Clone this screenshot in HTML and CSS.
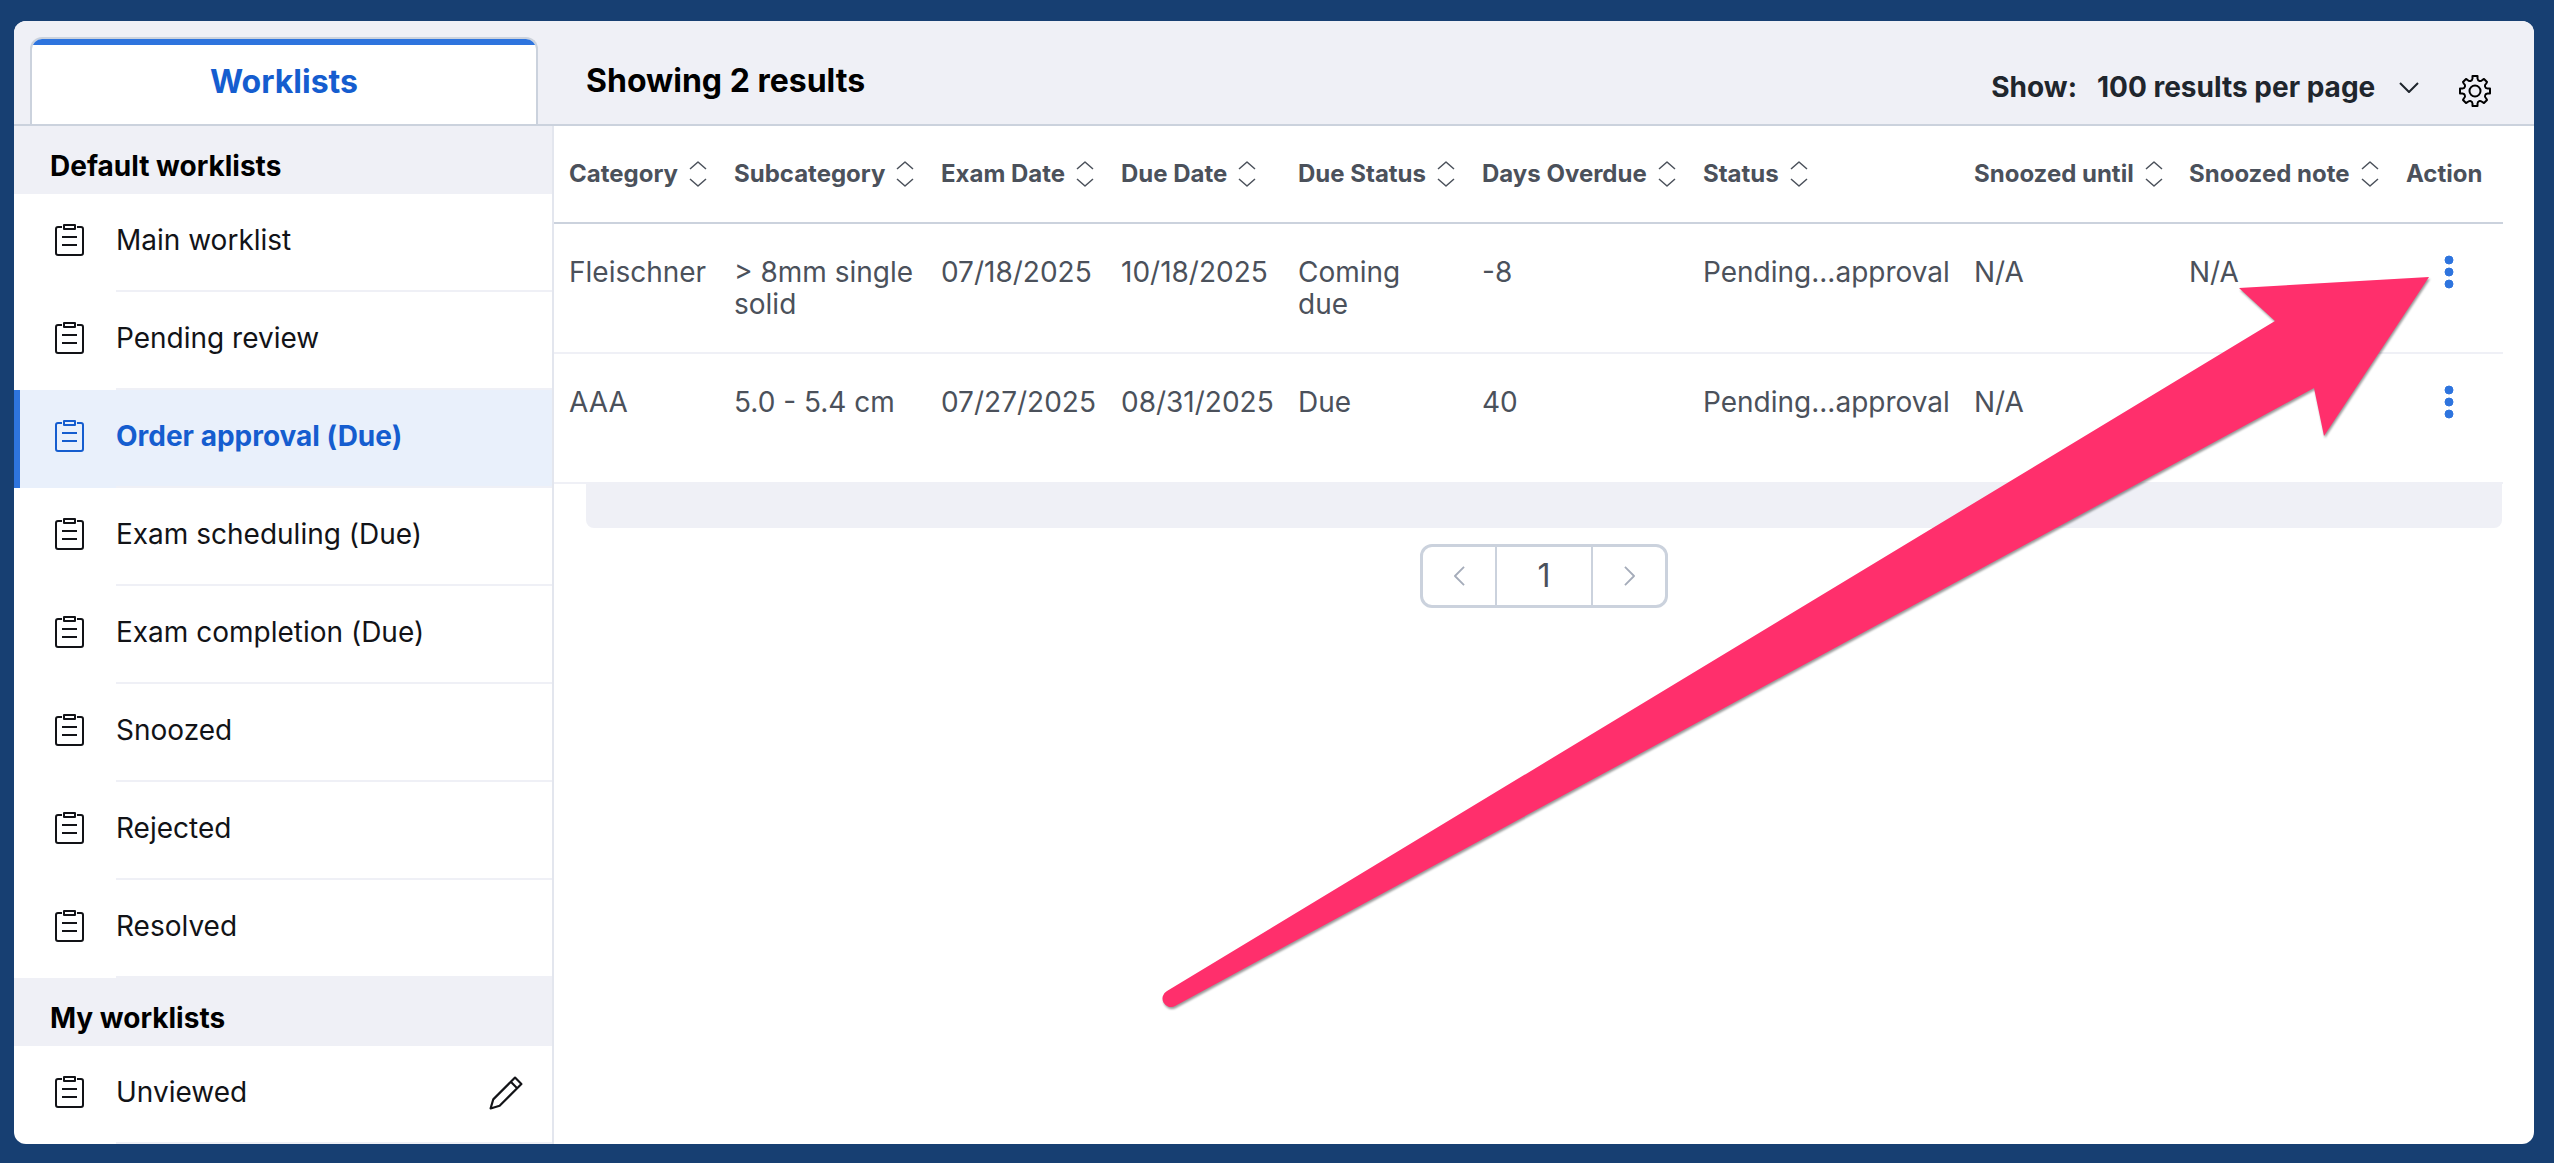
FILE: index.html
```html
<!DOCTYPE html>
<html lang="en">
<head>
  <meta charset="UTF-8" />
  <meta name="viewport" content="width=device-width, initial-scale=1.0" />
  <title>Worklists</title>
  <link rel="stylesheet" href="styles.css">
</head>
<body>
  <svg class="sprite" aria-hidden="true">
    <symbol id="clipboard" viewBox="0 0 30 32">
      <path d="M7 3H3Q1 3 1 5V29Q1 31 3 31H26Q28 31 28 29V5Q28 3 26 3H22M9 1H20V5H9ZM7 13H22M7 21H22" />
    </symbol>
    <symbol id="sort" viewBox="0 0 18 26">
      <path d="M1 8L9 1L17 8M1 18L9 25L17 18" />
    </symbol>
    <symbol id="dots" viewBox="0 0 10 34">
      <circle cx="5" cy="5" r="4" /><circle cx="5" cy="17" r="4" /><circle cx="5" cy="29" r="4" />
    </symbol>
  </svg>

  <div class="panel">
    <header class="topbar">
      <div class="tabs">
        <button class="tab" type="button">Worklists</button>
      </div>
      <h1 class="results-count">Showing 2 results</h1>
      <div class="tools">
        <label for="pageSize">Show:</label>
        <div class="select-wrap">
          <select id="pageSize">
            <option>100 results per page</option>
          </select>
          <svg class="chevron" viewBox="0 0 20 11"><path d="M1 1L10 10L19 1" /></svg>
        </div>
        <button class="icon-btn" type="button" aria-label="Settings">
          <svg class="gear" viewBox="0 0 32 32">
            <path d="M13.500 1H18.500V3.500Q18.700 5.500 20.500 6Q22 6.500 23.500 4.800L25 4L28 7L27.200 8.500Q25.500 10 26 11.500Q26.500 13.300 28.500 13.500H31V18.500H28.500Q26.500 18.700 26 20.500Q25.500 22 27.200 23.500L28 25L25 28L23.500 27.200Q22 25.500 20.500 26Q18.700 26.500 18.500 28.500V31H13.500V28.500Q13.300 26.500 11.500 26Q10 25.500 8.500 27.200L7 28L4 25L4.800 23.500Q6.500 22 6 20.500Q5.500 18.700 3.500 18.500H1V13.500H3.500Q5.500 13.300 6 11.500Q6.500 10 4.800 8.500L4 7L7 4L8.500 4.800Q10 6.500 11.500 6Q13.300 5.500 13.500 3.500Z" />
            <circle cx="16" cy="16" r="5.500" />
          </svg>
        </button>
      </div>
    </header>

    <div class="body">
      <nav class="sidebar">
        <h2>Default worklists</h2>
        <ul>
          <li><a href="#"><svg><use href="#clipboard" /></svg><span>Main worklist</span></a></li>
          <li><a href="#"><svg><use href="#clipboard" /></svg><span>Pending review</span></a></li>
          <li><a href="#" class="active"><svg><use href="#clipboard" /></svg><span>Order approval (Due)</span></a></li>
          <li><a href="#"><svg><use href="#clipboard" /></svg><span>Exam scheduling (Due)</span></a></li>
          <li><a href="#"><svg><use href="#clipboard" /></svg><span>Exam completion (Due)</span></a></li>
          <li><a href="#"><svg><use href="#clipboard" /></svg><span>Snoozed</span></a></li>
          <li><a href="#"><svg><use href="#clipboard" /></svg><span>Rejected</span></a></li>
          <li><a href="#"><svg><use href="#clipboard" /></svg><span>Resolved</span></a></li>
        </ul>
        <h2>My worklists</h2>
        <ul>
          <li>
            <a href="#"><svg><use href="#clipboard" /></svg><span>Unviewed</span></a>
            <button class="edit" type="button" aria-label="Edit worklist">
              <svg viewBox="0 0 32 32"><path d="M24.500 1.500L30.500 7.500L10 28L1.500 30.500L4 22ZM20.500 5.500L26.500 11.500" /></svg>
            </button>
          </li>
        </ul>
      </nav>

      <main class="content">
        <table>
          <colgroup>
            <col class="c-category"><col class="c-subcategory"><col class="c-exam"><col class="c-due"><col class="c-due-status">
            <col class="c-overdue"><col class="c-status"><col class="c-until"><col class="c-note"><col class="c-action">
          </colgroup>
          <thead>
            <tr>
              <th><button type="button">Category <svg><use href="#sort" /></svg></button></th>
              <th><button type="button">Subcategory <svg><use href="#sort" /></svg></button></th>
              <th><button type="button">Exam Date <svg><use href="#sort" /></svg></button></th>
              <th><button type="button">Due Date <svg><use href="#sort" /></svg></button></th>
              <th><button type="button">Due Status <svg><use href="#sort" /></svg></button></th>
              <th><button type="button">Days Overdue <svg><use href="#sort" /></svg></button></th>
              <th><button type="button">Status <svg><use href="#sort" /></svg></button></th>
              <th><button type="button">Snoozed until <svg><use href="#sort" /></svg></button></th>
              <th><button type="button">Snoozed note <svg><use href="#sort" /></svg></button></th>
              <th>Action</th>
            </tr>
          </thead>
          <tbody>
            <tr>
              <td>Fleischner</td>
              <td class="wrap">&gt; 8mm single solid</td>
              <td>07/18/2025</td>
              <td>10/18/2025</td>
              <td class="wrap">Coming<br>due</td>
              <td>-8</td>
              <td>Pending...approval</td>
              <td>N/A</td>
              <td>N/A</td>
              <td><button class="more" type="button" aria-label="Actions"><svg><use href="#dots" /></svg></button></td>
            </tr>
            <tr>
              <td>AAA</td>
              <td class="wrap">5.0 - 5.4 cm</td>
              <td>07/27/2025</td>
              <td>08/31/2025</td>
              <td class="wrap">Due</td>
              <td>40</td>
              <td>Pending...approval</td>
              <td>N/A</td>
              <td></td>
              <td><button class="more" type="button" aria-label="Actions"><svg><use href="#dots" /></svg></button></td>
            </tr>
          </tbody>
        </table>
        <div class="table-footer"></div>
        <div class="pager-row">
          <div class="pagination">
            <button type="button" aria-label="Previous page"><svg viewBox="0 0 12 22"><path d="M11 1L1 11L11 21" /></svg></button>
            <button class="page" type="button">1</button>
            <button type="button" aria-label="Next page"><svg viewBox="0 0 12 22"><path d="M1 1L11 11L1 21" /></svg></button>
          </div>
        </div>
      </main>
    </div>

    <svg class="pointer" viewBox="0 0 1280 750" aria-hidden="true">
      <path d="M1269 17L1079 28L1115 61L7 731A8 8 0 0 0 15 746L1154 128L1164 176Z" />
    </svg>
  </div>
</body>
</html>
```

FILE: styles.css
```css
* {
  box-sizing: border-box;
}
body {
  margin: 0;
  min-height: 100vh;
  padding: 21px 20px 19px 14px;
  background: #173f72;
  font-family: Inter, sans-serif;
  font-size: 28px;
  line-height: 32px;
  color: #4b515b;
  display: flex;
}
button, select {
  font: inherit;
  color: inherit;
  background: none;
  border: 0;
  padding: 0;
  margin: 0;
}
svg {
  display: block;
  fill: none;
  stroke: currentColor;
  stroke-width: 2;
  stroke-linejoin: round;
}
h1, h2, ul {
  margin: 0;
  padding: 0;
}
.sprite {
  position: absolute;
  width: 0;
  height: 0;
}
.panel {
  flex: 1;
  min-width: 0;
  position: relative;
  display: flex;
  flex-direction: column;
  background: #fff;
  border-radius: 12px;
  overflow: hidden;
}

/* top bar */
.topbar {
  display: flex;
  align-items: stretch;
  background: #eff0f6;
  border-bottom: 2px solid #cbd2dd;
  padding-top: 16px;
}
.tabs {
  width: 540px;
  padding: 0 16px;
}
.tab {
  position: relative;
  overflow: hidden;
  width: 100%;
  height: 87px;
  background: #fff;
  border: 2px solid #cbd2dd;
  border-bottom: 0;
  border-radius: 12px 12px 0 0;
  color: #155dcf;
  font-size: 32px;
  font-weight: 700;
}
.tab::before {
  content: "";
  position: absolute;
  inset: 0 0 auto;
  height: 6px;
  background: #2e74de;
}
.results-count {
  flex: 1;
  padding: 24px 0 0 32px;
  font-size: 32px;
  font-weight: 700;
  line-height: 40px;
  color: #000;
}
.tools {
  display: flex;
  align-items: center;
  gap: 20px;
  padding: 13px 43px 0 0;
  font-weight: 700;
  color: #1f262d;
}
.select-wrap {
  display: flex;
  align-items: center;
}
.select-wrap select {
  appearance: none;
  padding-right: 43px;
}
.chevron {
  width: 20px;
  height: 11px;
  margin-left: -20px;
  pointer-events: none;
}
.icon-btn {
  margin-left: 20px;
  padding-top: 7px;
  color: #000;
}
.gear {
  width: 32px;
  height: 32px;
}

/* sidebar */
.body {
  flex: 1;
  display: flex;
}
.sidebar {
  width: 540px;
  border-right: 2px solid #e3e6ee;
  color: #121317;
}
.sidebar h2 {
  height: 68px;
  padding: 24px 36px 12px;
  background: #eff0f6;
  color: #000;
  font-size: 28px;
  font-weight: 700;
  line-height: 32px;
}
.sidebar ul {
  list-style: none;
}
.sidebar li {
  display: flex;
  position: relative;
}
.sidebar a {
  flex: 1;
  display: flex;
  color: inherit;
  text-decoration: none;
  padding-left: 41px;
}
.sidebar a svg {
  width: 30px;
  height: 32px;
  margin: 30px 31px 0 0;
}
.sidebar a span {
  flex: 1;
  height: 98px;
  padding-top: 30px;
  border-bottom: 2px solid #eff0f6;
}
.sidebar .active {
  background: #e9f0fb;
  box-shadow: inset 6px 0 #2e74de;
  color: #155dcf;
  font-weight: 700;
}
.edit {
  position: absolute;
  right: 29px;
  top: 30px;
}
.edit svg {
  width: 34px;
  height: 34px;
}

/* results table */
.content {
  flex: 1;
  min-width: 0;
  padding-right: 32px;
}
table {
  width: 100%;
  table-layout: fixed;
  border-collapse: separate;
  border-spacing: 0;
}
.c-category { width: 165px; }
.c-subcategory { width: 207px; }
.c-exam { width: 180px; }
.c-due { width: 177px; }
.c-due-status { width: 184px; }
.c-overdue { width: 221px; }
.c-status { width: 271px; }
.c-until { width: 215px; }
.c-note { width: 217px; }
.c-action { width: 112px; }
th {
  height: 98px;
  padding: 0 0 0 15px;
  border-bottom: 2px solid #cbd2dd;
  font-size: 24px;
  font-weight: 700;
  text-align: left;
}
th button {
  display: flex;
  align-items: center;
  gap: 11px;
}
th svg {
  width: 18px;
  height: 26px;
  stroke-width: 1.5;
}
td {
  height: 130px;
  padding: 32px 0 32px 15px;
  border-bottom: 2px solid #eff0f6;
  vertical-align: top;
  white-space: nowrap;
}
.wrap {
  white-space: normal;
}
.more {
  display: block;
  margin: -1px 0 0 38px;
}
.more svg {
  width: 10px;
  height: 34px;
  fill: #2e74de;
  stroke: #2e74de;
  stroke-width: 1;
}
.table-footer {
  height: 44px;
  margin-left: 32px;
  background: #eff0f6;
  border-radius: 0 0 8px 8px;
}
.pager-row {
  display: flex;
  justify-content: center;
  padding: 16px 0 0 32px;
}
.pagination {
  display: flex;
  width: 248px;
  height: 64px;
  border: 3px solid #cbd2dd;
  border-radius: 12px;
}
.pagination button {
  flex: 1;
  display: flex;
  align-items: center;
  justify-content: center;
  color: #a5acba;
}
.pagination .page {
  flex: 0 0 98px;
  border: solid #cbd2dd;
  border-width: 0 2px;
  color: #4b515b;
  font-size: 32px;
}
.pagination svg {
  width: 11px;
  height: 20px;
}

/* callout arrow over the table */
.pointer {
  position: absolute;
  right: 94px;
  top: 239px;
  width: 1280px;
  height: 750px;
  fill: #ff2f6c;
  stroke: none;
  filter: drop-shadow(1px 2px 1px rgba(0, 0, 0, 0.4));
  pointer-events: none;
}
```
